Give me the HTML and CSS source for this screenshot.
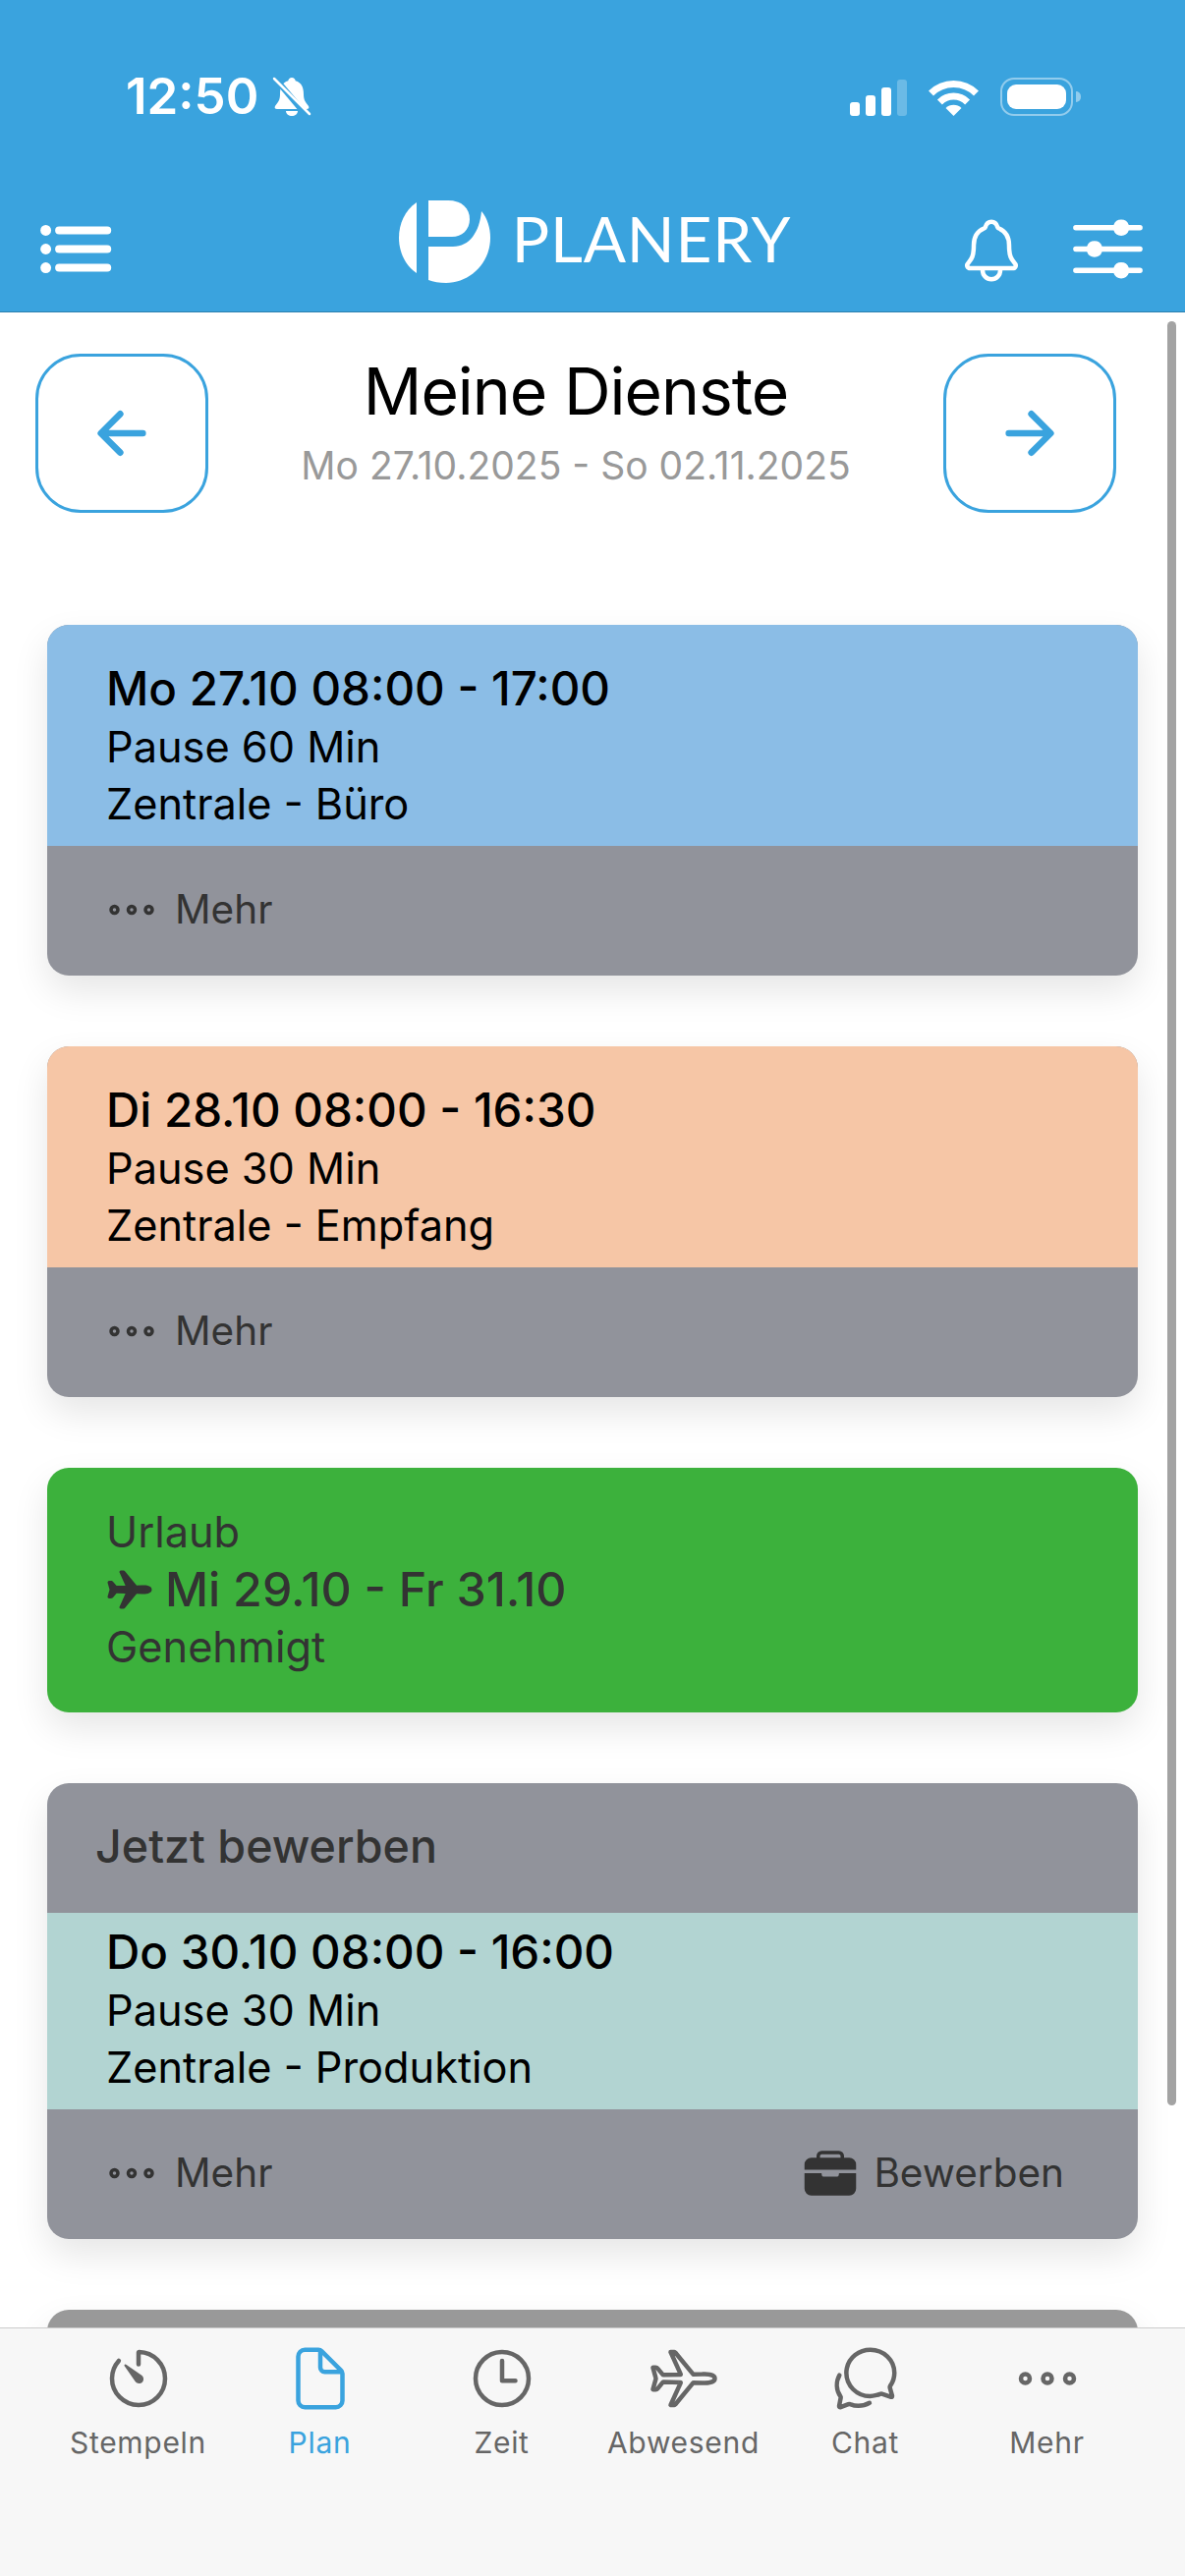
FILE: index.html
```html
<!DOCTYPE html>
<html lang="de">
<head>
    <meta charset="UTF-8">
    <title>Planery - Meine Dienste</title>
    <link rel="stylesheet" href="styles.css">
</head>
<body>
<div class="app">

    <header class="topbar">
        <div class="status">
            <div class="status-left">
                <span class="clock">12:50</span>
                <svg class="bell-off" viewBox="0 0 40 40">
                    <path fill="#fff" d="M20 1c2 0 3.5 1.5 3.7 3.2C30 6 32 11 32 18c0 6 2 8 5 12 1 2 0 3-2 3H5c-2 0-3-1-2-3 3-4 5-6 5-12 0-7 2-12 8.300-13.800C16.500 2.500 18 1 20 1z"/>
                    <path fill="#fff" d="M14 35h12c0 3-3 5-6 5s-6-2-6-5z"/>
                    <path stroke="#3aa3de" stroke-width="6" d="M-1 -3L36 41"/>
                    <path stroke="#fff" stroke-width="2.5" stroke-linecap="round" d="M2 2L38 38"/>
                </svg>
            </div>
            <div class="status-right">
                <svg class="signal" viewBox="0 0 58 37" fill="#fff">
                    <rect x="0" y="23" width="10" height="14" rx="3"/>
                    <rect x="16" y="16" width="10" height="21" rx="3"/>
                    <rect x="32" y="8" width="10" height="29" rx="3"/>
                    <rect x="48" y="0" width="10" height="37" rx="3" opacity=".25"/>
                </svg>
                <svg class="wifi" viewBox="0 0 51 37" fill="none" stroke="#fff">
                    <path stroke-width="7" d="M2.5 14A32.5 32.5 0 0 1 48.5 14"/>
                    <path stroke-width="7" d="M11.4 22.9A20 20 0 0 1 39.6 22.9"/>
                    <path fill="#fff" stroke="none" d="M25.5 37L17.5 29A11.3 11.3 0 0 1 33.5 29Z"/>
                </svg>
                <div class="battery">
                    <div class="battery-level"></div>
                    <div class="battery-tip"></div>
                </div>
            </div>
        </div>

        <div class="nav">
            <svg class="nav-icon-lg" viewBox="0 0 512 512" fill="#fff">
                <path fill="none" stroke="#fff" stroke-linecap="round" stroke-width="48" d="M160 144h288M160 256h288M160 368h288"/>
                <circle cx="80" cy="144" r="32"/>
                <circle cx="80" cy="256" r="32"/>
                <circle cx="80" cy="368" r="32"/>
            </svg>
            <div class="brand">
                <svg class="brand-mark" viewBox="0 0 93 84" fill="#fff">
                    <path d="M18 2C6 10 0 24 0 38C0 52 6 66 18 74Z"/>
                    <path d="M30 0H50C64 0 72 8 72 19C72 30 64 37 54 37H30Z"/>
                    <path d="M30 47H55C72 47 82 32 84 11C90 18 93 28 93 38C93 64 72 84 48 84C41 84 35 83 30 81Z"/>
                </svg>
                <span class="brand-name">PLANERY</span>
            </div>
            <div class="nav-right">
                <svg class="nav-icon" viewBox="0 0 512 512" fill="none" stroke="#fff" stroke-width="32" stroke-linecap="round" stroke-linejoin="round">
                    <path d="M427.68 351.43C402 320 383.87 304 383.87 217.35 383.87 138 343.35 109.73 310 96c-4.43-1.82-8.6-6-9.95-10.55C294.2 65.54 277.8 48 256 48s-38.21 17.55-44 37.47c-1.35 4.6-5.52 8.71-9.95 10.53-33.39 13.75-73.87 41.92-73.87 121.35C128.13 304 110 320 84.32 351.43 73.68 364.45 83 384 101.61 384h308.88c18.51 0 27.77-19.61 17.19-32.57zM320 384v16a64 64 0 01-128 0v-16"/>
                </svg>
                <svg class="nav-icon-lg" viewBox="0 0 512 512" fill="#fff">
                    <path d="M64 144h226.75a48 48 0 0090.5 0H448a16 16 0 000-32h-66.75a48 48 0 00-90.5 0H64a16 16 0 000 32zM448 368h-66.75a48 48 0 00-90.5 0H64a16 16 0 000 32h226.75a48 48 0 0090.5 0H448a16 16 0 000-32zM448 240H221.25a48 48 0 00-90.5 0H64a16 16 0 000 32h66.75a48 48 0 0090.5 0H448a16 16 0 000-32z"/>
                </svg>
            </div>
        </div>
    </header>

    <main class="content">
        <div class="week">
            <button class="week-btn">
                <svg class="arrow" viewBox="0 0 512 512"><path d="M244 400L100 256l144-144M120 256h292"/></svg>
            </button>
            <div class="week-title">
                <h1>Meine Dienste</h1>
                <p>Mo 27.10.2025 - So 02.11.2025</p>
            </div>
            <button class="week-btn">
                <svg class="arrow" viewBox="0 0 512 512"><path d="M268 112l144 144-144 144M392 256H100"/></svg>
            </button>
        </div>

        <section class="card">
            <div class="shift shift-blue">
                <div class="shift-time">Mo 27.10 08:00 - 17:00</div>
                <div>Pause 60 Min</div>
                <div>Zentrale - Büro</div>
            </div>
            <div class="card-foot">
                <span class="foot-item">
                    <svg class="foot-icon dots" viewBox="0 0 512 512"><circle cx="256" cy="256" r="32"/><circle cx="416" cy="256" r="32"/><circle cx="96" cy="256" r="32"/></svg>
                    Mehr
                </span>
            </div>
        </section>

        <section class="card">
            <div class="shift shift-orange">
                <div class="shift-time">Di 28.10 08:00 - 16:30</div>
                <div>Pause 30 Min</div>
                <div>Zentrale - Empfang</div>
            </div>
            <div class="card-foot">
                <span class="foot-item">
                    <svg class="foot-icon dots" viewBox="0 0 512 512"><circle cx="256" cy="256" r="32"/><circle cx="416" cy="256" r="32"/><circle cx="96" cy="256" r="32"/></svg>
                    Mehr
                </span>
            </div>
        </section>

        <section class="card absence">
            <div>Urlaub</div>
            <div class="absence-range">
                <svg class="plane" viewBox="0 0 512 512" fill="#333">
                    <path d="M186.62 464H160a16 16 0 01-14.57-22.6l64.46-142.25L113.1 297l-35.3 42.77C71.07 348.23 65.7 352 52 352H34.08a17.66 17.66 0 01-14.7-7.06c-2.38-3.21-4.72-8.65-2.44-16.41l19.82-71c.15-.53.33-1.06.53-1.58a.38.38 0 000-.15 14.82 14.82 0 01-.53-1.59l-19.84-71.45c-2.15-7.61.2-12.93 2.56-16.06a16.83 16.83 0 0113.6-6.7H52c10.23 0 20.16 4.59 26 12l34.57 42.05 97.32-1.44-64.44-142A16 16 0 01160 48h26.91a25 25 0 0119.35 9.8l125.05 152 57.77-1.52c4.23-.23 15.95-.31 18.66-.31C463 208 496 225.94 496 256c0 9.46-3.78 27-29.07 38.16-14.93 6.6-34.85 9.94-59.21 9.94-2.68 0-14.37-.08-18.66-.31l-57.76-1.54-125.36 152a25 25 0 01-19.32 9.75z"/>
                </svg>
                Mi 29.10 - Fr 31.10
            </div>
            <div>Genehmigt</div>
        </section>

        <section class="card">
            <div class="card-head">Jetzt bewerben</div>
            <div class="shift shift-teal">
                <div class="shift-time">Do 30.10 08:00 - 16:00</div>
                <div>Pause 30 Min</div>
                <div>Zentrale - Produktion</div>
            </div>
            <div class="card-foot">
                <span class="foot-item">
                    <svg class="foot-icon dots" viewBox="0 0 512 512"><circle cx="256" cy="256" r="32"/><circle cx="416" cy="256" r="32"/><circle cx="96" cy="256" r="32"/></svg>
                    Mehr
                </span>
                <span class="foot-item">
                    <svg class="foot-icon" viewBox="0 0 512 512" fill="#333">
                        <path d="M496 176a64 64 0 00-64-64h-48V96a48 48 0 00-48-48H176a48 48 0 00-48 48v16H80a64 64 0 00-64 64v48h480zm-144-64H160V96a16 16 0 0116-16h160a16 16 0 0116 16zM336 264a24 24 0 01-24 24H200a24 24 0 01-24-24v-4a4 4 0 00-4-4H16v144a64 64 0 0064 64h352a64 64 0 0064-64V256H340a4 4 0 00-4 4z"/>
                    </svg>
                    Bewerben
                </span>
            </div>
        </section>

        <section class="card card-next"></section>

        <div class="scrollbar"></div>
    </main>

    <nav class="tabs">
        <a class="tab">
            <svg class="tab-icon" viewBox="0 0 512 512">
                <path d="M112.91 128A191.85 191.85 0 0064 254c-1.18 106.35 85.65 193.8 192 194 106.2.2 192-85.83 192-192 0-104.54-83.55-189.61-187.5-192a4.36 4.36 0 00-4.5 4.37V152"/>
                <path class="solid" d="M233.38 278.63l-79-113a8.13 8.13 0 0111.32-11.32l113 79a32.5 32.5 0 01-37.25 53.26 33.21 33.21 0 01-8.07-8.94z"/>
            </svg>
            Stempeln
        </a>
        <a class="tab tab-active">
            <svg class="tab-icon" viewBox="0 0 512 512">
                <path d="M416 221.25V416a48 48 0 01-48 48H144a48 48 0 01-48-48V96a48 48 0 0148-48h98.75a32 32 0 0122.62 9.37l141.26 141.26a32 32 0 019.37 22.62z"/>
                <path d="M256 56v120a32 32 0 0032 32h120"/>
            </svg>
            Plan
        </a>
        <a class="tab">
            <svg class="tab-icon" viewBox="0 0 512 512">
                <path d="M256 64C150 64 64 150 64 256s86 192 192 192 192-86 192-192S362 64 256 64z"/>
                <path d="M256 128v144h96"/>
            </svg>
            Zeit
        </a>
        <a class="tab">
            <svg class="tab-icon" viewBox="0 0 512 512">
                <path d="M407.72 224c-3.4 0-14.79.1-18 .3l-64.9 1.7a1.83 1.83 0 01-1.69-.9L193.55 67.56a9 9 0 00-6.66-3.56H160l73 161a2.35 2.35 0 01-2.26 3.35l-121.69 1.8a8.06 8.06 0 01-6.6-3.1l-37-45c-3-3.9-8.62-6-13.51-6H33.08c-1.29 0-1.1 1.21-.75 2.43l19.84 71.42a16.3 16.3 0 010 11.9L32.33 333c-.59 1.95-.52 3 1.77 3H52c8.14 0 9.25-1.06 13.41-6.3l37.7-45.7a8.19 8.19 0 016.6-3.1l120.68 2.7a2.7 2.7 0 012.43 3.74L160 448h26.64a9 9 0 006.65-3.55L323.14 287c.39-.6 2-.9 2.69-.9l63.9 1.7c3.3.2 14.59.3 18 .3C452 288.1 480 275 480 256s-27.88-32-72.28-32z"/>
            </svg>
            Abwesend
        </a>
        <a class="tab">
            <svg class="tab-icon" viewBox="0 0 512 512">
                <path d="M431 320.6c-1-3.6 1.2-8.6 3.3-12.2a33.68 33.68 0 012.1-3.1A162 162 0 00464 215c.3-92.2-77.5-167-173.7-167-83.9 0-153.9 57.1-170.3 132.9a160.7 160.7 0 00-3.7 34.2c0 92.3 74.8 169.1 171 169.1 15.3 0 35.9-4.6 47.2-7.7s22.5-7.2 25.4-8.3a26.44 26.44 0 019.3-1.7 26 26 0 0110.1 2l56.7 20.1a13.52 13.52 0 003.9 1 8 8 0 008-8 12.85 12.85 0 00-.5-2.7z"/>
                <path d="M66.46 232a146.23 146.23 0 006.39 152.67c2.31 3.49 3.61 6.19 3.21 8s-11.93 61.87-11.93 61.87a8 8 0 002.71 7.68A8.17 8.17 0 0072 464a7.26 7.26 0 002.91-.6l56.21-22a15.7 15.7 0 0112 .2c18.94 7.38 39.88 12 60.83 12A159.21 159.21 0 00284 432.11"/>
            </svg>
            Chat
        </a>
        <a class="tab">
            <svg class="tab-icon" viewBox="0 0 512 512">
                <circle cx="256" cy="256" r="32"/>
                <circle cx="416" cy="256" r="32"/>
                <circle cx="96" cy="256" r="32"/>
            </svg>
            Mehr
        </a>
    </nav>

</div>
</body>
</html>
```
FILE: styles.css
```css
* {
    box-sizing: border-box;
}
body {
    margin: 0;
    font-family: Inter, "Liberation Sans", sans-serif;
    background-color: #fff;
}
.app {
    width: 1206px;
    height: 2622px;
    display: flex;
    flex-direction: column;
    overflow: hidden;
}

/* top bar */
.topbar {
    height: 318px;
    padding-top: 78px;
    background-color: #3aa3de;
    border-bottom: 1px solid #2c7fae;
    color: #fff;
}
.status {
    height: 40px;
    display: flex;
    justify-content: space-between;
    padding: 0 114px 0 128px;
}
.status-left, .status-right {
    display: flex;
    align-items: center;
}
.clock {
    font-size: 51px;
    line-height: 40px;
    font-weight: 600;
}
.bell-off {
    width: 40px;
    height: 40px;
    margin-left: 14px;
    overflow: hidden;
}
.signal {
    width: 58px;
    height: 37px;
    margin-top: 2px;
}
.wifi {
    width: 51px;
    height: 37px;
    margin: 2px 0 0 22px;
}
.battery {
    width: 74px;
    height: 39px;
    margin-left: 22px;
    padding: 5px;
    border: 2px solid rgba(255, 255, 255, .45);
    border-radius: 14px;
    position: relative;
}
.battery-level {
    height: 100%;
    background-color: #fff;
    border-radius: 9px;
}
.battery-tip {
    position: absolute;
    right: -10px;
    top: 12px;
    width: 5px;
    height: 11px;
    background-color: rgba(255, 255, 255, .45);
    border-radius: 0 5px 5px 0;
}
.nav {
    height: 84px;
    margin-top: 86px;
    padding: 0 35px 0 33px;
    display: grid;
    grid-template-columns: 1fr auto 1fr;
    grid-template-rows: 84px;
    align-items: center;
}
.nav-icon-lg {
    width: 87px;
    height: 87px;
    margin-top: 14px;
    display: block;
}
.nav-icon {
    width: 72px;
    height: 72px;
    margin-top: 18px;
    display: block;
}
.brand {
    display: flex;
    align-items: center;
    gap: 22px;
    margin-left: 7px;
}
.brand-mark {
    width: 93px;
    height: 84px;
}
.brand-name {
    font-family: Lato, sans-serif;
    font-weight: 400;
    font-size: 64px;
    line-height: 84px;
    letter-spacing: .8px;
    margin-bottom: 6px;
}
.nav-right {
    display: flex;
    justify-content: flex-end;
    align-items: center;
    gap: 39px;
}

/* content */
.content {
    flex: 1;
    min-height: 0;
    position: relative;
    overflow: hidden;
}
.week {
    display: flex;
    justify-content: space-between;
    padding: 42px 70px 0 36px;
    margin-bottom: 114px;
}
.week-btn {
    width: 176px;
    height: 162px;
    padding: 0;
    display: flex;
    align-items: center;
    justify-content: center;
    background-color: #fff;
    border: 3px solid #3aa3de;
    border-radius: 46px;
}
.arrow {
    width: 70px;
    height: 70px;
    fill: none;
    stroke: #3aa3de;
    stroke-width: 48;
    stroke-linecap: round;
    stroke-linejoin: round;
}
.week-title {
    text-align: center;
}
.week-title h1 {
    margin: 0;
    font-size: 66px;
    line-height: 76px;
    font-weight: 400;
    letter-spacing: -1px;
    color: #000;
}
.week-title p {
    margin: 15px 0 0;
    font-size: 39px;
    line-height: 46px;
    color: #999;
}
.card {
    margin: 0 48px 72px;
    border-radius: 22px;
    overflow: hidden;
    font-size: 43.3px;
    line-height: 58.5px;
    box-shadow: 0 16px 36px rgba(0, 0, 0, .1);
    background-color: #91939b;
}
.shift {
    padding: 36px 60px 13.5px;
    color: #000;
}
.shift-time {
    font-size: 47.5px;
    font-weight: 500;
}
.shift-blue {
    background-color: #8bbde6;
}
.shift-orange {
    background-color: #f6c6a6;
}
.shift-teal {
    background-color: #b2d4d2;
    padding-top: 11px;
    padding-bottom: 13.5px;
}
.card-foot {
    height: 132px;
    padding: 0 75px 2px 58px;
    display: flex;
    align-items: center;
    justify-content: space-between;
    color: #333;
    font-size: 40.5px;
}
.foot-item {
    display: flex;
    align-items: center;
    gap: 16px;
}
.foot-icon {
    width: 56px;
    height: 56px;
}
.dots circle {
    fill: none;
    stroke: #333;
    stroke-width: 32;
}
.card-head {
    height: 132px;
    padding: 0 0 3px 49px;
    display: flex;
    align-items: center;
    color: #333;
    font-size: 46.6px;
    font-weight: 450;
}
.absence {
    height: 249px;
    padding: 36px 60px 0;
    background-color: #3cb13c;
    color: #333;
}
.absence-range {
    display: flex;
    align-items: center;
    gap: 12px;
    font-size: 48.3px;
    font-weight: 450;
}
.plane {
    width: 48px;
    height: 48px;
}
.card-next {
    height: 200px;
    background-color: #999;
}
.scrollbar {
    position: absolute;
    right: 9px;
    top: 9px;
    width: 9px;
    height: 1816px;
    background-color: #a3a3a3;
    border-radius: 5px;
}

/* bottom tabs */
.tabs {
    height: 253px;
    padding: 15px 48px 0;
    display: grid;
    grid-template-columns: repeat(6, 1fr);
    align-items: start;
    background-color: #f7f7f7;
    border-top: 1px solid #ccc;
    position: relative;
}
.tab {
    display: flex;
    flex-direction: column;
    align-items: center;
    font-size: 30px;
    line-height: 36px;
    color: #666;
    letter-spacing: .7px;
}
.tab-icon {
    width: 72px;
    height: 72px;
    margin-bottom: 11px;
    fill: none;
    stroke: #666;
    stroke-width: 32;
    stroke-linecap: round;
    stroke-linejoin: round;
}
.tab-icon .solid {
    fill: #666;
    stroke: none;
}
.tab-active {
    color: #3aa3de;
}
.tab-active .tab-icon {
    stroke: #3aa3de;
}
```
